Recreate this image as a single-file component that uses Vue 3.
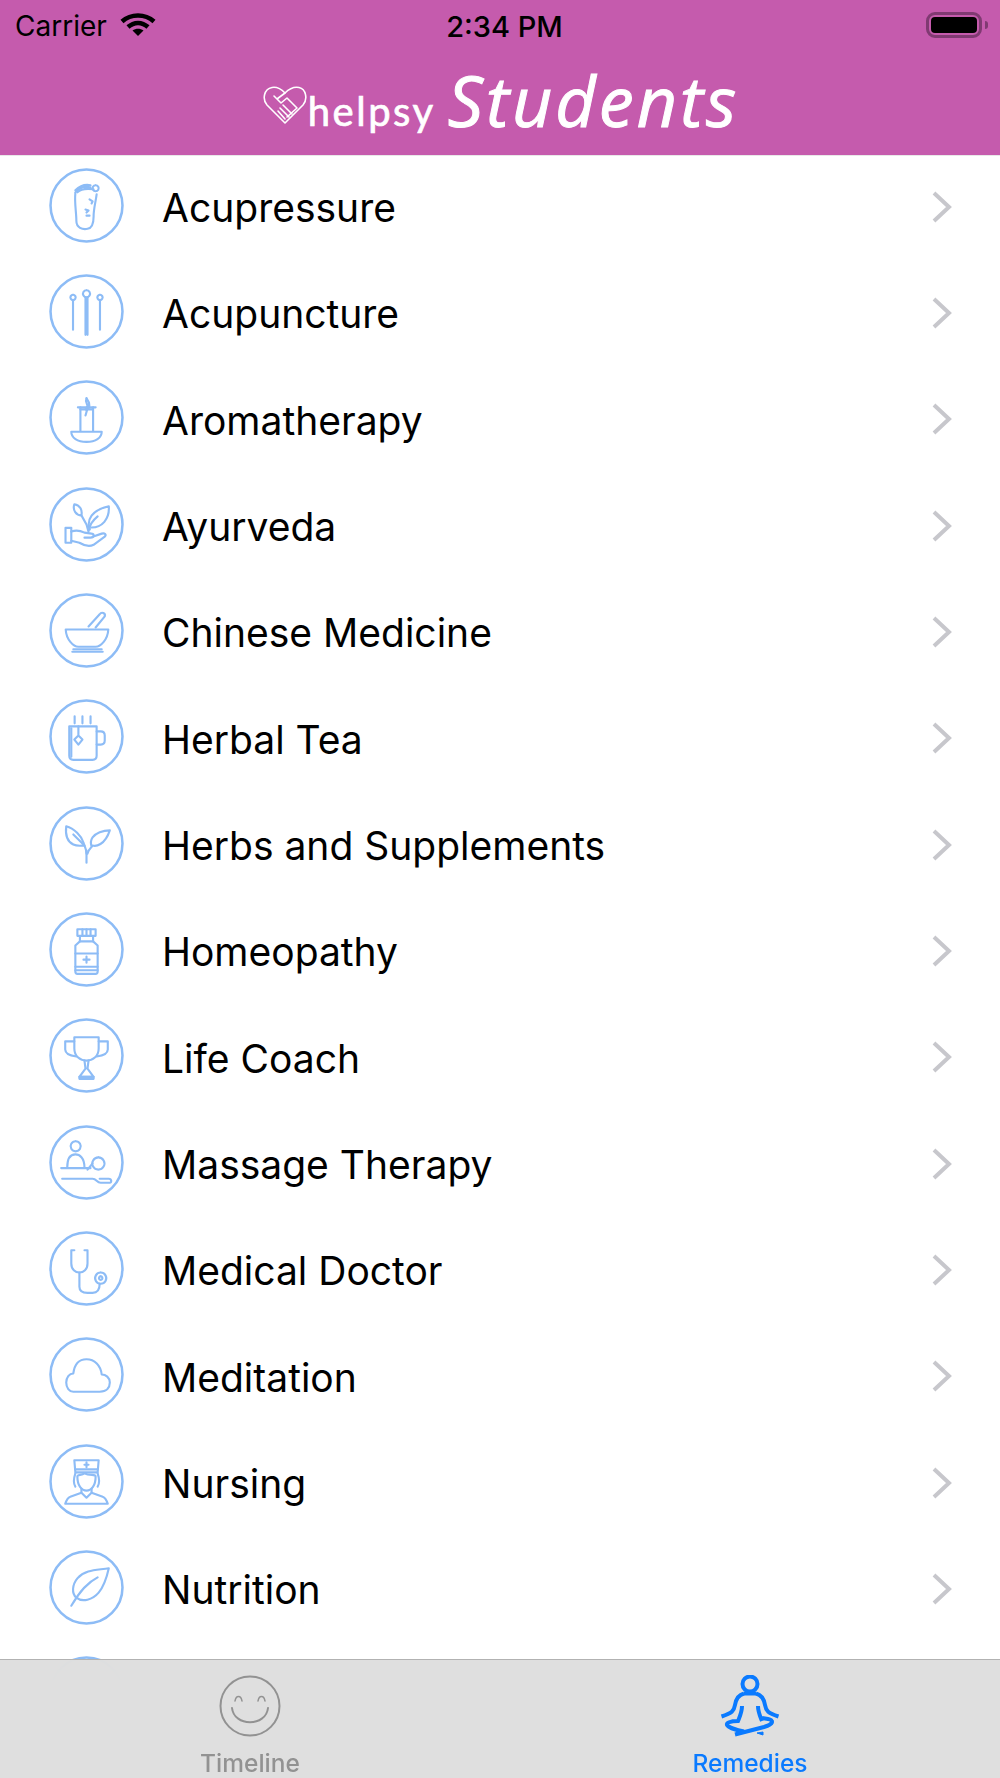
<script setup>
const remedies = [
  { name: 'Acupressure', paths: ['M26 25C25 34 27 44 27 52C27 59 33 61 38 60C43 59 44 54 44 48C44 40 46 34 47 26', 'M26 24C30 19 36 18 41 19', 'M26 22C30 18 36 16 41 17', 'M28 24C32 20 37 20 44 21', 'M46 17a3 3 0 1 0 .01 0', 'M40 31l3 2-1 2M36 41l3 1-2 2M37 47l3 0'] },
  { name: 'Acupuncture', paths: ['M37 16a3.5 3.5 0 1 0 .01 0', 'M36 23V60M38 23V60', 'M23.7 20.5a2.6 2.6 0 1 0 .01 0', 'M23.7 25.7V55', 'M50.3 20.5a2.6 2.6 0 1 0 .01 0', 'M50.3 25.7V55'] },
  { name: 'Aromatherapy', paths: ['M22 51H52C52 57 46 61 37 61C28 61 22 57 22 51Z', 'M31 27V50M43.5 27V50', 'M28.500 27H46', 'M37 18C35 22 39 24 38 28L36 35M39 24L36 29', 'M37 18C39 21 41 24 39 28', 'M31 29H43'] },
  { name: 'Ayurveda', paths: ['M16.3 40.3H22V55H16.3Z', 'M22 44C27 42 31 43 35 45L42 46C45 46 45 50 41 50L35 50', 'M43 49L52 46C55 45 57 47 55 49L44 57C40 59 35 58 30 55L22 53', 'M40 42C37 32 42 23 59 19C60 32 52 40 42 40', 'M40 42C40 38 42 34 48 29', 'M25 17C31 18 33 23 32 28C27 28 23 23 25 17Z', 'M32 28L37 37L39 44'] },
  { name: 'Chinese Medicine', paths: ['M16.5 36H58.5C58 46 51 53 46 53H29C24 53 17 46 16.5 36Z', 'M24 55.5H52M23 58H53', 'M39 33L50 21C52 18 56 20 55 23L46 34'] },
  { name: 'Herbal Tea', paths: ['M20 27H47V56C47 59 45 60 43 60H24C22 60 20 59 20 56Z', 'M47 32H51C54 32 55 34 55 36V41C55 43 54 45 51 45H47', 'M25.3 17V24M33 17V24M41 17V24', 'M29 27V36M29 36L33 40L29 45L25 40Z', 'M22 29V57'] },
  { name: 'Herbs and Supplements', paths: ['M37 56V44', 'M37 47C37 42 35 40 34 36C32 30 25 22 17 20C16 28 18 35 24 38C28 40 32 39 35 39', 'M38 47C39 42 42 41 43 39C46 40 55 39 60 24C53 24 46 27 43 31C41 34 41 37 42 40', 'M24 28L35 39'] },
  { name: 'Homeopathy', paths: ['M28 17H46V23.5H28Z', 'M33 17V23M37 17V23M41 17V23', 'M30.5 24V29H43.5V24', 'M30.5 29L26 33V59C26 60.5 27 61 28 61H46C47 61 48 60.5 48 59V33L43.5 29', 'M26 41H48M26 54H48M26 57.5H48', 'M37 44V50M34 47H40'] },
  { name: 'Life Coach', paths: ['M25 19H49V30C49 38 43 42 37 42C31 42 25 38 25 30Z', 'M25 23H16V31C16 35 20 37 27 38', 'M49 23H58V31C58 35 54 37 47 38', 'M35 42L36 50L30 58H44L38 50L39 42', 'M30 58H44V60H30Z'] },
  { name: 'Massage Therapy', paths: ['M26.3 16a5 5 0 1 0 .01 0', 'M18 42C18 32 22 29 26 29C30 29 35 32 35 42', 'M12 42.500H41', 'M48.700 32a6 6 0 1 0 .01 0', 'M43 38L38 44', 'M13 53H43C47 53 47 57 51 57H60C62 57 62 53 59 53H50'] },
  { name: 'Medical Doctor', paths: ['M25 19H22V32C22 38 26 41 30 41C34 41 38 38 38 32V19H35', 'M30 41V55C30 59 33 61 38 61H43C48 61 50 58 50 52', 'M51 41a5.500 5.500 0 1 0 .01 0', 'M51 44.800a1.700 1.700 0 1 0 .01 0'] },
  { name: 'Meditation', paths: ['M24 54H50C57 54 60 50 60 45C60 40 56 37 52 37C51 28 45 22 37 22C29 22 25 28 24 36C20 36 17 40 17 45C17 50 20 54 24 54Z'] },
  { name: 'Nursing', paths: ['M25 16H49L48 28H26Z', 'M37 18V23M35 20.500H39', 'M26 25H48', 'M28 32C28 41 32 46 37 46C42 46 46 41 46 32C46 29 40 32 35 29C32 31 28 30 28 32Z', 'M26 29C24 35 24 39 26 42M48 29C50 35 50 39 48 42', 'M32 44V48L37 53L42 48V44', 'M32 48L21 52C18 53 17 56 16 59H58C57 56 56 53 53 52L42 48'] },
  { name: 'Nutrition', paths: ['M59 18C48 20 36 19 28 28C23 34 22 43 27 47C33 52 43 49 49 42C55 35 57 27 59 18Z', 'M48 27C38 32 31 40 22 55'] },
  { name: '', paths: [] },
]
</script>

<template>
  <div class="phone">
    <header class="top">
      <div class="status">
        <div class="status-left">
          <span>Carrier</span>
          <svg class="wifi" viewBox="0 0 36 24">
            <path d="M2 9.500C11 1.500 25 1.500 34 9.500" fill="none" stroke="#000" stroke-width="4.500" />
            <path d="M8 15C14 9.500 22 9.500 28 15" fill="none" stroke="#000" stroke-width="4.500" />
            <path d="M12.500 18.500C16 16 20 16 23.500 18.500L18 24Z" fill="#000" />
          </svg>
        </div>
        <div class="time">2:34 PM</div>
        <div class="battery">
          <div class="battery-body"><div class="battery-fill"></div></div>
          <div class="battery-nub"></div>
        </div>
      </div>
      <div class="brand">
        <svg class="heart" viewBox="0 0 44 38" fill="none" stroke="#fff" stroke-width="1.600" stroke-linejoin="round" stroke-linecap="round">
          <path d="M22 37L4 19C-1 13 1 3 9 1.500C14 .5 18 3 22 7C26 3 31 .5 36 1.500C43 3 45 13 40 19Z" />
          <path d="M22 7L14 13L11 10M14 13L18 17L24 12L34 22L24 31" />
          <path d="M20 19L29 28M17 22L26 31M15 25L22 33" />
        </svg>
        <span class="helpsy">helpsy</span>
        <span class="students">Students</span>
      </div>
    </header>

    <main class="list">
      <div v-for="item in remedies" :key="item.name" class="row">
        <svg class="icon" viewBox="0 0 74 74" fill="none" stroke="#8dbcf6" stroke-width="2.100" stroke-linecap="round" stroke-linejoin="round">
          <circle cx="37" cy="37" r="35.500" stroke-width="2.500" />
          <path v-for="d in item.paths" :key="d" :d="d" />
        </svg>
        <span class="name">{{ item.name }}</span>
        <svg class="chevron" viewBox="0 0 20 32" fill="none" stroke="#c7c7cc" stroke-width="4">
          <path d="M2 2L17 16L2 30" />
        </svg>
      </div>
    </main>

    <nav class="tabs">
      <div class="tab">
        <svg class="tab-icon" viewBox="0 0 62 62" fill="none" stroke="#929292" stroke-linecap="round">
          <circle cx="31" cy="31" r="29.500" stroke-width="2" />
          <path d="M16 26C17 20 22 20 23 26M39 26C40 20 45 20 46 26" stroke-width="1.500" />
          <path d="M13 33C15 52 47 52 49 33" stroke-width="2" />
        </svg>
        <span class="tab-label">Timeline</span>
      </div>
      <div class="tab active">
        <svg class="tab-icon" viewBox="0 0 60 62" fill="none" stroke="#0a7aff" stroke-width="4">
          <circle cx="30" cy="9" r="7.500" />
          <path d="M24 18.500C18 20 16 24 15 30C14 36 12 38 1.500 41.500" />
          <path d="M36 18.500C42 20 44 24 45 30C46 36 48 38 58.500 41.500" />
          <path d="M24 18.500H36" />
          <path d="M22 31C22 37 20 41 18 46C10 46 6 48 7 50C8 52 16 55 24 56.500" />
          <path d="M38 31C38 37 40 41 42 46" />
          <path d="M15 59.500L44 52C54 49 54 45 48 44L42 43" />
          <path d="M37 58L43 60L43 57Z" fill="#0a7aff" stroke-width="1" />
        </svg>
        <span class="tab-label">Remedies</span>
      </div>
    </nav>
  </div>
</template>

<style scoped>
.phone {
  position: relative;
  width: 1000px;
  height: 1778px;
  display: flex;
  flex-direction: column;
  overflow: hidden;
  background: #fff;
  font-family: Inter, "Liberation Sans", sans-serif;
  color: #000;
}

.top {
  height: 156px;
  flex: none;
  position: relative;
  z-index: 1;
  background: #c55bad;
  border-bottom: 1px solid #e8e8e8;
  box-sizing: border-box;
}

.status {
  height: 52px;
  display: grid;
  grid-template-columns: 1fr auto 1fr;
  align-items: center;
  padding: 0 12px 0 15px;
  font-size: 28px;
}

.status-left {
  display: flex;
  align-items: center;
  gap: 13px;
}

.wifi {
  width: 36px;
  height: 24px;
  margin-top: -4px;
}

.time {
  font-size: 29px;
  font-weight: 500;
  padding-left: 6px;
}

.battery {
  justify-self: end;
  display: flex;
  align-items: center;
  gap: 3px;
  margin-top: -2px;
}

.battery-body {
  width: 56px;
  height: 26px;
  box-sizing: border-box;
  border: 3px solid #803a72;
  border-radius: 9px;
  padding: 2px;
}

.battery-fill {
  height: 100%;
  background: #000;
  border-radius: 4px;
}

.battery-nub {
  width: 3px;
  height: 8px;
  background: #803a72;
  border-radius: 0 3px 3px 0;
}

.brand {
  display: flex;
  align-items: flex-end;
  justify-content: center;
  height: 76px;
  color: #fff;
  padding-left: 2px;
}

.heart {
  width: 44px;
  height: 38px;
  margin-bottom: 4px;
}

.helpsy {
  font-family: Lato, sans-serif;
  font-size: 40px;
  line-height: 40px;
  letter-spacing: 2.500px;
  margin-left: 1px;
  margin-bottom: -3px;
  -webkit-text-stroke: 0.700px #fff;
}

.students {
  font-family: "Open Sans", sans-serif;
  font-style: italic;
  font-size: 70px;
  line-height: 76px;
  letter-spacing: 3px;
  margin-left: 12px;
  margin-bottom: -10px;
  -webkit-text-stroke: 1px #fff;
}

.list {
  flex: 1;
  overflow: hidden;
  margin-top: -4px;
}

.row {
  height: 106.330px;
  display: flex;
  align-items: center;
  padding-left: 49px;
}

.icon {
  width: 75px;
  height: 75px;
  flex: none;
  filter: blur(0.6px);
}

.name {
  flex: 1;
  margin-left: 38px;
  font-size: 39px;
  margin-top: 5px;
}

.chevron {
  width: 20px;
  height: 32px;
  margin-right: 48px;
  margin-top: 3px;
}

.tabs {
  position: absolute;
  left: 0;
  right: 0;
  bottom: 0;
  height: 119px;
  box-sizing: border-box;
  display: flex;
  background: rgba(222, 222, 222, 0.96);
  backdrop-filter: blur(20px);
  border-top: 1px solid #b2b2b2;
  z-index: 2;
}

.tab {
  flex: 1;
  display: flex;
  flex-direction: column;
  align-items: center;
  padding-top: 15px;
  color: #929292;
}

.tab.active {
  color: #0a7aff;
}

.tab-icon {
  width: 62px;
  height: 62px;
}

.tab-label {
  font-size: 24.500px;
  margin-top: 12px;
  line-height: 28px;
  font-weight: 500;
}
</style>
